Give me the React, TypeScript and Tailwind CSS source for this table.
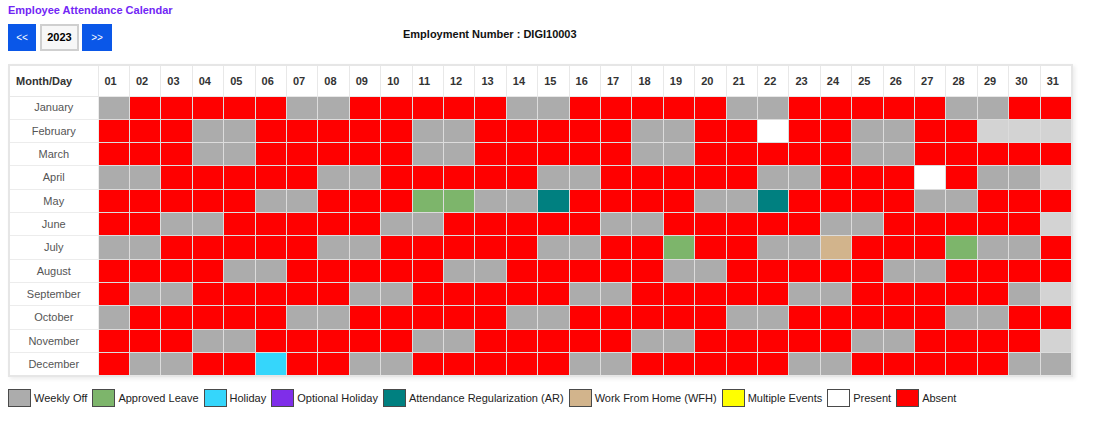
type Status =
  | 'off'
  | 'leave'
  | 'holiday'
  | 'optional'
  | 'ar'
  | 'wfh'
  | 'multi'
  | 'present'
  | 'absent'
  | 'none';

const STATUS_BG: Record<Status, string> = {
  off: 'bg-[#acacac]',
  leave: 'bg-[#7db56b]',
  holiday: 'bg-[#35d6fb]',
  optional: 'bg-[#7f2ee9]',
  ar: 'bg-[#008080]',
  wfh: 'bg-[#d2b48c]',
  multi: 'bg-[#ffff00]',
  present: 'bg-white',
  absent: 'bg-[#ff0000]',
  none: 'bg-[#d3d3d3]',
};

const LEGEND: { status: Status; label: string }[] = [
  { status: 'off', label: 'Weekly Off' },
  { status: 'leave', label: 'Approved Leave' },
  { status: 'holiday', label: 'Holiday' },
  { status: 'optional', label: 'Optional Holiday' },
  { status: 'ar', label: 'Attendance Regularization (AR)' },
  { status: 'wfh', label: 'Work From Home (WFH)' },
  { status: 'multi', label: 'Multiple Events' },
  { status: 'present', label: 'Present' },
  { status: 'absent', label: 'Absent' },
];

const MONTHS = [
  'January',
  'February',
  'March',
  'April',
  'May',
  'June',
  'July',
  'August',
  'September',
  'October',
  'November',
  'December',
];

// month-day -> recorded event (everything else is weekly off / absent)
const EVENTS: Record<string, Status> = {
  '2-22': 'present',
  '4-27': 'present',
  '5-11': 'leave',
  '5-12': 'leave',
  '5-15': 'ar',
  '5-22': 'ar',
  '7-19': 'leave',
  '7-24': 'wfh',
  '7-28': 'leave',
  '12-6': 'holiday',
};

const DAYS = Array.from({ length: 31 }, (_, i) => i + 1);

function statusFor(year: number, month: number, day: number): Status {
  const daysInMonth = new Date(year, month + 1, 0).getDate();
  if (day > daysInMonth) return 'none';
  const event = EVENTS[`${month + 1}-${day}`];
  if (event) return event;
  const dow = new Date(year, month, day).getDay();
  if (dow === 0 || dow === 6) return 'off';
  return 'absent';
}

export default function App() {
  const year = 2023;

  return (
    <div className="min-h-screen bg-white px-2 pt-[3px] font-['Liberation_Sans',Arial,sans-serif] text-[11px]">
      <h1 className="text-[11px] font-bold leading-[14px] text-[#7226f5]">Employee Attendance Calendar</h1>

      {/* Year switcher + employee */}
      <div className="mt-[7px] flex h-[27px] items-start">
        <button className="h-[27px] w-[28px] bg-[#0a57e8] text-[10px] text-white">&lt;&lt;</button>
        <div className="ml-[4px] flex h-[27px] w-[39px] items-center justify-center border-2 border-[#cfcfcf] bg-[#f7f7f7] text-[11px] font-bold text-black">
          {year}
        </div>
        <button className="ml-[3px] h-[27px] w-[30px] bg-[#0a57e8] text-[10px] text-white">&gt;&gt;</button>
        <p className="ml-[291px] mt-[2px] text-[11px] font-bold text-[#111]">Employment Number : DIGI10003</p>
      </div>

      {/* Calendar */}
      <table className="mt-[13px] w-[1065px] table-fixed border-collapse border-2 border-[#e6e6e6] shadow-[2px_2px_4px_rgba(0,0,0,0.08)]">
        <colgroup>
          <col className="w-[89px]" />
          {DAYS.map((d) => (
            <col key={d} />
          ))}
        </colgroup>
        <thead>
          <tr className="h-[31px] border-b border-b-[#c9dcee]">
            <th className="border border-[#e8e8e8] pl-[6px] text-left text-[11px] font-bold text-[#333]">Month/Day</th>
            {DAYS.map((d) => (
              <th key={d} className="border border-[#e8e8e8] pl-[6px] text-left text-[11px] font-bold text-[#333]">
                {String(d).padStart(2, '0')}
              </th>
            ))}
          </tr>
        </thead>
        <tbody>
          {MONTHS.map((name, m) => (
            <tr key={name} className="h-[23.33px]">
              <td className="border border-[#ececec] text-center text-[11px] text-[#555]">{name}</td>
              {DAYS.map((d) => (
                <td key={d} className={`border border-[#dcdcdc] ${STATUS_BG[statusFor(year, m, d)]}`} />
              ))}
            </tr>
          ))}
        </tbody>
      </table>

      {/* Legend */}
      <div className="mt-[12px] flex items-center">
        {LEGEND.map((item) => (
          <div key={item.label} className="mr-[5px] flex items-center">
            <span className={`h-[18px] w-[23px] border-[1.5px] border-[#4a4a4a] ${STATUS_BG[item.status]}`} />
            <span className="ml-[3px] text-[11px] text-[#222]">{item.label}</span>
          </div>
        ))}
      </div>
    </div>
  );
}
